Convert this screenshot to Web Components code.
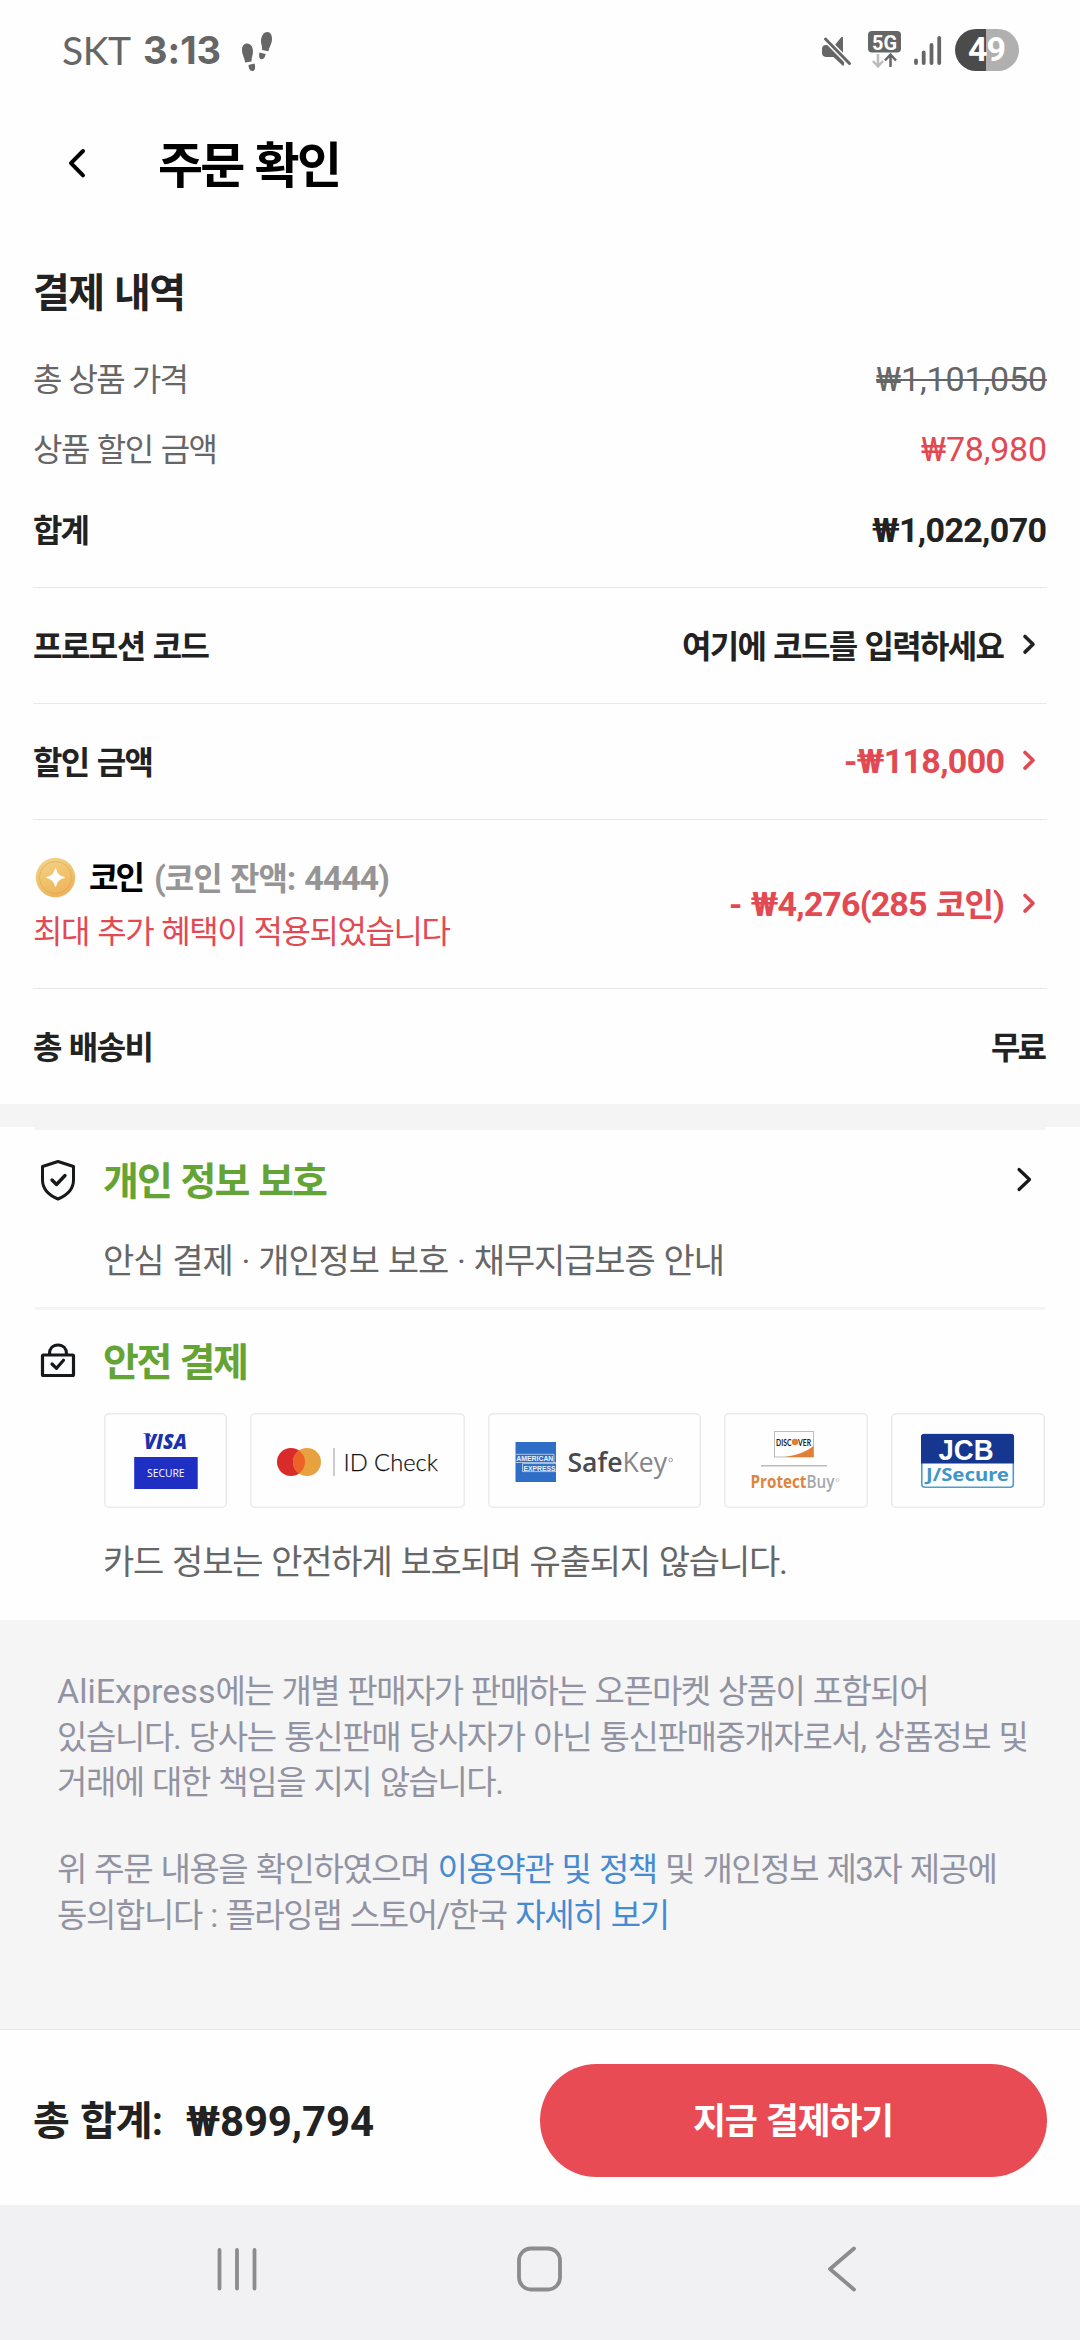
<!DOCTYPE html>
<html lang="ko">
<head>
<meta charset="utf-8">
<title>주문 확인</title>
<style>
html,body{margin:0;padding:0;background:#fefefe}
body{width:1080px;height:2340px;overflow:hidden;font-family:Roboto,"Noto Sans CJK KR",sans-serif;color:#222}
</style>
</head>
<body>
<checkout-page></checkout-page>
<script>
const define = (name, css, html) => customElements.define(name, class extends HTMLElement {
  constructor() {
    super();
    this.attachShadow({ mode: 'open' }).innerHTML = `<style>${css}</style>${html}`;
  }
});

/* Latin and digit run, set slightly larger than the Hangul around it */
define('num-run', ':host{display:inline;font-size:1.0625em;letter-spacing:inherit}:host([struck]){text-decoration:line-through;text-decoration-thickness:2px}', '<slot></slot>');

/* Single line of text tracked to a given advance width */
customElements.define('fit-text', class extends HTMLElement {
  connectedCallback() {
    if (this.shadowRoot) return;
    this.attachShadow({ mode: 'open' }).innerHTML =
      '<style>:host{display:block;white-space:nowrap;flex:none;word-spacing:.05em}span{display:inline-block}</style><span><slot></slot></span>';
    queueMicrotask(() => this.fit());
  }
  fit() {
    const target = Number(this.getAttribute('width'));
    const span = this.shadowRoot.querySelector('span');
    this.style.letterSpacing = '0px';
    const natural = span.getBoundingClientRect().width;
    const spacing = (target - natural) / Math.max(1, [...this.textContent].length - 1);
    this.style.letterSpacing = spacing.toFixed(3) + 'px';
    span.style.marginRight = (-spacing).toFixed(3) + 'px';
  }
});

define('status-bar', `
:host{display:flex;justify-content:space-between;align-items:flex-start;height:100px;padding:0 60px 0 62px;box-sizing:border-box;color:#666}
.l,.r{display:flex}
.l{height:100px;align-items:center}
.c{font:400 39px/100px Lato,sans-serif;width:81px}
.t{font:700 38px/100px Inter,sans-serif;width:97px}
svg{display:block;flex:none}`,
`<div class="l"><fit-text class="c" width="69">SKT</fit-text><fit-text class="t" width="78">3:13</fit-text>
<svg width="34" height="100" viewBox="240 0 34 100" fill="#666"><path d="M242 50c0-4 2-6.500 5-6.500 4 0 6 4 6 8.500 0 3-1.500 5-1.500 9.500l-6.500 1c0-4-3-7.500-3-12.500zM248.500 65l6-1.400c1 3 1 7-1.800 7.400-3 .3-4-3-4.200-6zM272 39c0-4-1.500-7-4.500-7-4.500 0-6.500 5-6.500 9.500 0 3 1.500 4.500 1 8.500l6.500 1.300c.5-4 3.500-7.300 3.500-12.300zM259.500 52.500l6.200 1.500c-.5 3-2 5.500-4.200 5.200-2.700-.4-2.800-4-2-6.700z"/></svg></div>
<div class="r"><svg width="200" height="100" viewBox="820 0 200 100">
<g fill="#666"><path d="M826 45h6l12 12v8.500h-1.500L833.500 57H826q-4-.500-4-4v-4q0-4 4-4zM834.500 45.500 841 37.500q2-1.500 2 .5v16.500z"/><path d="M825 38.500 850 64" stroke="#fefefe" stroke-width="6"/><path d="M825.500 39 849.500 63.500" stroke="#666" stroke-width="3" stroke-linecap="round"/>
<rect x="868" y="31" width="33" height="21.500" rx="4"/></g>
<text x="872" y="49.500" font-family="Roboto" font-weight="700" font-size="20" fill="#fff" textLength="25" lengthAdjust="spacingAndGlyphs">5G</text>
<path d="M878 54v12M873 61l5 5.500 5-5.500" fill="none" stroke="#bbb" stroke-width="2.500"/><path d="M890.500 67V54.500M885 60.500l5.500-6 5.500 6" fill="none" stroke="#666" stroke-width="2.500"/>
<path d="M916 60.500V63M923.700 52.500V63M931.500 45V63M939.200 38V63" stroke="#666" stroke-width="3.800" stroke-linecap="round"/>
<path d="M976 29h10v42h-10a21 21 0 0 1 0-42z" fill="#4b4b4b"/><path d="M986 29h12a21 21 0 0 1 0 42h-12z" fill="#b0b0b0"/>
<text x="968" y="61" font-family="Roboto" font-weight="700" font-size="34" fill="#fff" textLength="38">49</text></svg></div>`);

define('app-header', `
:host{display:flex;height:130px;box-sizing:border-box;align-items:center;padding-left:66px;color:#000}
svg{width:92px;height:40px;display:block}
fit-text{font-weight:700;font-size:49px;line-height:132px;padding-top:3px}`,
`<svg viewBox="66 145 92 40"><path d="M83 151 71 163.200 83 175.300" fill="none" stroke="#000" stroke-width="4" stroke-linecap="round" stroke-linejoin="round"/></svg>
<fit-text width="184">주문 확인</fit-text>`);

/* label on the left, amount on the right, optional chevron */
define('pay-row', `
:host{display:flex;justify-content:space-between;align-items:center;box-sizing:border-box;height:var(--h,116px);font-size:32px;line-height:42px;font-weight:700;color:#222}
:host([line]){border-bottom:1px solid #e9e9e9}
:host([plain]){font-weight:400;color:#666}
::slotted(fit-text:not([slot])),::slotted(.ko){padding-top:2px}
.v{display:flex;align-items:center}
:host([red]) .v{color:#e24a53}
svg{display:none;width:42px;height:24px}
:host([more]) svg{display:block;margin-top:-3px}`,
`<slot></slot><div class="v"><slot name="value"></slot><svg viewBox="0 0 42 24"><path d="m20 4.500 8 7.800-8 7.800" fill="none" stroke="currentColor" stroke-width="3.600" stroke-linecap="round" stroke-linejoin="round"/></svg></div>`);

define('coin-label', `
:host{display:flex;flex-direction:column}
.a{display:flex;align-items:center;height:53px;color:#000;margin-top:-1px}
.a svg{width:45px;height:42px;margin:0 10px 0 1px}
.a fit-text{padding-top:2px}
.g{color:#959595;margin-left:9px}
.b{font-weight:400;color:#e24a53;line-height:56px;height:53px}`,
`<div class="a"><svg viewBox="34 857 45 42"><defs><linearGradient id="c" x1="0" y1="0" x2=".4" y2="1"><stop offset="0" stop-color="#f1d690"/><stop offset=".55" stop-color="#f1c46e"/><stop offset="1" stop-color="#eeb45e"/></linearGradient></defs><circle cx="55.500" cy="878.500" r="19.700" fill="url(#c)"/><circle cx="55.500" cy="878.500" r="16" fill="none" stroke="#d9a552" stroke-width="1" opacity=".65"/><path d="M55.500 869.500q1.500 7.500 9 9-7.500 1.500-9 9-1.500-7.500-9-9 7.500-1.500 9-9z" fill="#fff" stroke="#fff" stroke-linejoin="round"/></svg>
<fit-text width="56">코인</fit-text><fit-text class="g" width="236"><num-run>(</num-run>코인 잔액<num-run>: 4444)</num-run></fit-text></div>
<fit-text class="b" width="418">최대 추가 혜택이 적용되었습니다</fit-text>`);

define('payment-summary', `
:host{display:block;padding:0 33px;height:874px;box-sizing:border-box}
h2{margin:0;font-size:40px;font-weight:700;line-height:128px;height:114px;color:#222}
`,
`<h2><fit-text width="153">결제 내역</fit-text></h2>
<pay-row plain style="--h:70px"><fit-text width="156">총 상품 가격</fit-text><fit-text slot="value" width="171"><num-run struck>₩1,101,050</num-run></fit-text></pay-row>
<pay-row plain red style="--h:70px"><fit-text width="185">상품 할인 금액</fit-text><fit-text slot="value" width="126"><num-run>₩78,980</num-run></fit-text></pay-row>
<pay-row line style="--h:104px;padding-bottom:11px"><fit-text width="57">합계</fit-text><fit-text slot="value" width="175"><num-run>₩1,022,070</num-run></fit-text></pay-row>
<pay-row line more><fit-text width="177">프로모션 코드</fit-text><fit-text slot="value" class="ko" width="323">여기에 코드를 입력하세요</fit-text></pay-row>
<pay-row line more red><fit-text width="121">할인 금액</fit-text><fit-text slot="value" width="161"><num-run>-₩118,000</num-run></fit-text></pay-row>
<pay-row line more red style="--h:169px"><coin-label></coin-label><fit-text slot="value" width="276"><num-run>- ₩4,276(285 </num-run>코인<num-run>)</num-run></fit-text></pay-row>
<pay-row style="--h:115px"><fit-text width="121">총 배송비</fit-text><fit-text slot="value" class="ko" width="56">무료</fit-text></pay-row>`);

define('section-gap', `
:host{display:block;height:26px;background:linear-gradient(#f4f4f4,#f4f4f4) 0 0/100% 23px no-repeat,linear-gradient(#f4f4f4,#f4f4f4) 35px 23px/1010px 3px no-repeat}`, '');

define('trust-heading', `
:host{display:flex;align-items:center;height:52px;font-size:39px;font-weight:700;line-height:52px;color:#64a435}
.i{width:70px;flex:none}
.t{flex:1;padding-top:2px}`, `<div class="i"><slot name="icon"></slot></div><div class="t"><slot></slot></div><slot name="end"></slot>`);

define('card-badge', `
:host{display:block;height:95px;width:var(--w);border-radius:5px;box-shadow:inset 0 0 0 1.500px #ebebee;flex:none}
::slotted(svg){display:block;width:100%;height:100%}`, `<slot></slot>`);

define('card-badges', `
:host{display:flex;justify-content:space-between;width:941px;height:95px}
svg{display:block}`,
`<card-badge style="--w:123px"><svg viewBox="104 1413 123 95">
<text x="144" y="1448.500" font-family="Open Sans" font-weight="800" font-style="italic" font-size="21" fill="#1d31ad" textLength="43" lengthAdjust="spacingAndGlyphs">VISA</text><path d="M142.500 1433.300h7l2 4q-3-2.500-9-4z" fill="#1d31ad"/>
<rect x="134.200" y="1457" width="63.500" height="32" fill="#1f2fc3"/><text x="147" y="1476.700" font-family="Open Sans" font-size="11.500" fill="#fff" textLength="37.500" lengthAdjust="spacingAndGlyphs">SECURE</text></svg></card-badge>
<card-badge style="--w:215px"><svg viewBox="250 1413 215 95"><circle cx="291" cy="1462" r="14" fill="#d92b2a"/><circle cx="307" cy="1462" r="14" fill="#e8a13f"/><path d="M299 1450.500a14 14 0 0 1 0 23 14 14 0 0 1 0-23z" fill="#ec6228"/><path d="M334 1448v28" stroke="#bbb" stroke-width="1.500"/><text x="343.500" y="1470.700" font-family="Lato" font-weight="300" font-size="24" fill="#111" stroke="#111" stroke-width=".25" textLength="94.500" lengthAdjust="spacingAndGlyphs">ID Check</text></svg></card-badge>
<card-badge style="--w:213px"><svg viewBox="488 1413 213 95"><rect x="515.500" y="1442" width="40.500" height="40" fill="#2e6ec6"/><path d="M515.500 1454.300H554v8.200h2M556 1463.600h-33.500v8H556M515.500 1462.500H554" fill="none" stroke="#dce9f7" stroke-width=".7"/><text x="516.300" y="1461.200" font-family="Liberation Sans" font-weight="700" font-size="8" fill="#e9f2fb" textLength="37" lengthAdjust="spacingAndGlyphs">AMERICAN</text><text x="523.500" y="1470.700" font-family="Liberation Sans" font-weight="700" font-size="8" fill="#e9f2fb" textLength="32" lengthAdjust="spacingAndGlyphs">EXPRESS</text>
<text x="567.500" y="1472" font-family="Open Sans" font-weight="600" font-size="27" fill="#4a4a4e" textLength="99.500" lengthAdjust="spacingAndGlyphs">Safe<tspan font-weight="400" fill="#85868a">Key</tspan></text><circle cx="670.700" cy="1460" r="1.800" fill="none" stroke="#85868a" stroke-width=".8"/></svg></card-badge>
<card-badge style="--w:144px"><svg viewBox="724 1413 144 95"><rect x="774.500" y="1431.500" width="39" height="25.500" fill="#fff" stroke="#bbb"/><path d="M785 1457q18-2.500 28.500-11v11z" fill="#e07f38"/><circle cx="795" cy="1442" r="3.200" fill="#e07f38"/><text x="776" y="1445.500" font-family="Lato" font-weight="700" font-size="9.500" fill="#222" textLength="15.500" lengthAdjust="spacingAndGlyphs">DISC</text><text x="798" y="1445.500" font-family="Lato" font-weight="700" font-size="9.500" fill="#222" textLength="13" lengthAdjust="spacingAndGlyphs">VER</text><path d="M761 1465.700h66" stroke="#bbb" stroke-width="1.500"/><text transform="translate(750.500 1488) scale(.824 1)" font-family="Open Sans" font-weight="700" font-size="18.500" fill="#df8440">Protect<tspan font-weight="600" fill="#a6a7ab">Buy</tspan></text><circle cx="837.500" cy="1480" r="1.500" fill="none" stroke="#bbb" stroke-width=".8"/></svg></card-badge>
<card-badge style="--w:154px"><svg viewBox="891 1413 154 95"><rect x="921.800" y="1434.500" width="91.500" height="52.700" rx="3" fill="#fff" stroke="#4a9fd0" stroke-width="1.600"/><path d="M921 1463.500v-27q0-2.500 2.500-2.500h88q2.500 0 2.500 2.500v27z" fill="#15378f"/><text x="938.500" y="1459.700" font-family="Liberation Sans" font-weight="700" font-size="29" fill="#fff" textLength="55" lengthAdjust="spacingAndGlyphs">JCB</text><text x="926" y="1481" font-family="Noto Sans" font-weight="700" font-size="17.500" fill="#4095c9" textLength="83" lengthAdjust="spacingAndGlyphs">J/Secure</text></svg></card-badge>`);

define('trust-panel', `
:host{display:block;height:490px;box-sizing:border-box;padding:25px 35px 0 33px;color:#666}
.s{font-size:34px;line-height:46px;padding-left:70px}
.one{margin-top:31px}
.rule{height:3px;background:#f4f4f4;margin:23px 0 0 2px}
.lock{margin-top:26px}
card-badges{margin:25px 0 0 71px}
.two{margin-top:31px}
svg{display:block}`,
`<trust-heading><svg slot="icon" width="50" height="52" viewBox="33 1155 50 52" fill="none" stroke="#16181a" stroke-width="3" stroke-linejoin="round" stroke-linecap="round"><path d="M58 1161.500 73.500 1166.500v13.500c0 9-7 15.500-15.500 19-8.500-3.500-15.500-10-15.500-19v-13.500z"/><path d="m52 1180 4.500 4.500 8.500-9" stroke-width="3.400"/></svg><fit-text width="225">개인 정보 보호</fit-text>
<svg slot="end" width="44" height="30" viewBox="1001 1166 44 30"><path d="m1019 1169.500 10.500 10-10.500 10" fill="none" stroke="#16181a" stroke-width="3.200" stroke-linecap="round" stroke-linejoin="round"/></svg></trust-heading>
<fit-text class="s one" width="622">안심 결제 · 개인정보 보호 · 채무지급보증 안내</fit-text>
<div class="rule"></div>
<trust-heading class="lock"><svg slot="icon" width="50" height="52" viewBox="33 1336 50 52" fill="none" stroke="#16181a" stroke-width="3.200" stroke-linejoin="round" stroke-linecap="round"><rect x="42.500" y="1355" width="31" height="20.500" rx="1"/><path d="M49.500 1354c0-5.500 3.500-9 8.500-9s8.500 3.500 8.500 9M52 1364l4.500 4.300 7-8"/></svg><fit-text width="146">안전 결제</fit-text></trust-heading>
<card-badges></card-badges>
<fit-text class="s two" width="685">카드 정보는 안전하게 보호되며 유출되지 않습니다.</fit-text>`);

define('legal-notice', `
:host{display:block;height:409px;box-sizing:border-box;background:#f5f5f5;padding:49px 57px 0;font-size:33px;line-height:45.700px;color:#9293a2}
p{margin:0 0 41px}
.r{display:flex}
a{color:#468bd2}`,
`<p><span class="r"><fit-text width="158.500" style="font-size:34px">AliExpress</fit-text><fit-text width="714">에는 개별 판매자가 판매하는 오픈마켓 상품이 포함되어</fit-text></span>
<fit-text width="972">있습니다. 당사는 통신판매 당사자가 아닌 통신판매중개자로서, 상품정보 및</fit-text>
<fit-text width="447">거래에 대한 책임을 지지 않습니다.</fit-text></p>
<p><fit-text width="941">위 주문 내용을 확인하였으며 <a>이용약관 및 정책</a> 및 개인정보 제3자 제공에</fit-text>
<fit-text width="613">동의합니다 : 플라잉랩 스토어/한국 <a>자세히 보기</a></fit-text></p>`);

define('pay-bar', `
:host{display:flex;box-sizing:border-box;height:176px;border-top:1px solid #e6e6e6;background:#fefefe;padding:34px 33px 28px 33px;justify-content:space-between;align-items:center;font-weight:700;font-size:40px}
.t{display:flex;gap:23px;line-height:56px;padding-top:2px}
button{all:unset;box-sizing:border-box;width:507px;height:113px;border-radius:57px;background:#e84b53;color:#fff;display:flex;align-items:center;justify-content:center;font-size:36px;line-height:50px;padding-top:3px}`,
`<div class="t"><fit-text width="130">총 합계:</fit-text><fit-text width="188" style="font-size:42px">₩899,794</fit-text></div><button><fit-text width="201">지금 결제하기</fit-text></button>`);

define('nav-bar', `
:host{display:flex;height:135px;background:#f1f1f3;justify-content:space-between;padding:0 213px;align-items:center;box-sizing:border-box}
svg{display:block;width:48px;height:52px;fill:none;stroke:#8c8c8c;stroke-width:3.800;stroke-linecap:round;stroke-linejoin:round;margin-top:-7px}`,
`<svg viewBox="213 2243 48 52"><path d="M219.500 2250v38.500M237 2250v38.500M254.500 2250v38.500"/></svg>
<svg viewBox="516 2243 48 52"><rect x="519" y="2248.500" width="41" height="41" rx="12"/></svg>
<svg viewBox="819 2243 48 52"><path d="M854 2248.500 830 2269l24 20.500"/></svg>`);

define('checkout-page', ':host{display:flex;flex-direction:column;width:1080px;height:2340px}:host>*{flex:none}',
`<status-bar></status-bar><app-header></app-header><payment-summary></payment-summary><section-gap></section-gap><trust-panel></trust-panel><legal-notice></legal-notice><pay-bar></pay-bar><nav-bar></nav-bar>`);
</script>
</body>
</html>
